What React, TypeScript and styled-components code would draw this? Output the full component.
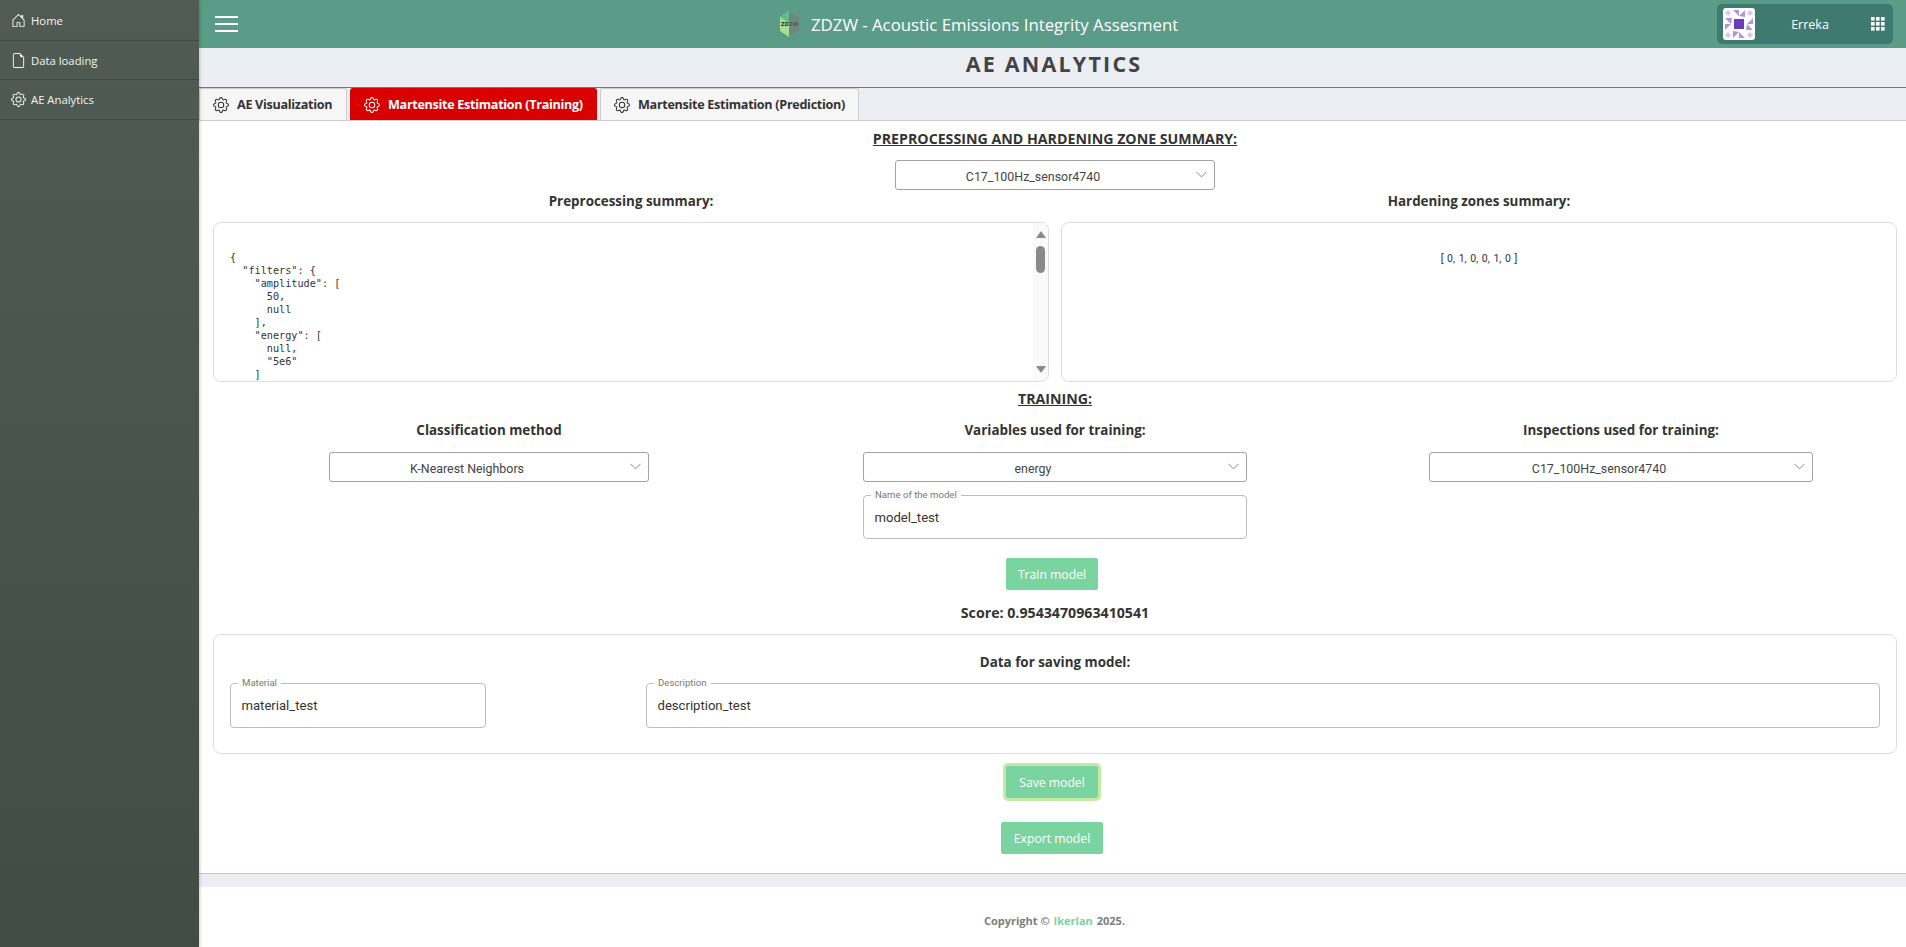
import React from 'react';
import styled, { createGlobalStyle } from 'styled-components';
import { ChevronDown } from 'lucide-react';
import { BsFileEarmark, BsGear, BsHouseDoor } from 'react-icons/bs';

const GlobalStyle = createGlobalStyle`
  html, body {
    margin: 0;
    padding: 0;
    height: 947px;
    overflow: hidden;
    background: #fff;
    font-family: "Open Sans", "Liberation Sans", sans-serif;
    color: #333;
  }
  * {
    box-sizing: border-box;
  }
`;

const Page = styled.div`
  display: grid;
  grid-template-columns: 199px 1fr;
  height: 947px;
`;

const Sidebar = styled.nav`
  background: linear-gradient(180deg, #505c53 0%, #4a564d 40%, #404c44 100%);
  box-shadow: 1px 0 3px rgba(0, 0, 0, 0.2);
  display: flex;
  flex-direction: column;
  z-index: 2;
`;

const SideItem = styled.a<{ $h: number }>`
  display: flex;
  align-items: center;
  gap: 5px;
  height: ${(p) => p.$h}px;
  padding: 1px 0 0 11px;
  color: #f2f4f2;
  font-size: 11.3px;
  border-bottom: 1px solid #3f4a43;
  svg {
    flex: none;
  }
`;

const SideItemLast = styled(SideItem)`
  padding-top: 0;
`;

const Main = styled.div`
  display: flex;
  flex-direction: column;
  min-width: 0;
`;

const TopBar = styled.header`
  position: relative;
  display: flex;
  align-items: center;
  justify-content: space-between;
  height: 48px;
  background: #5a9c87;
  padding: 0 13px 0 16px;
`;

const Burger = styled.div`
  display: flex;
  flex-direction: column;
  gap: 5px;
  width: 23px;
  span {
    display: block;
    height: 2px;
    background: #fff;
  }
`;

const Brand = styled.div`
  position: absolute;
  left: 580px;
  top: 0;
  height: 48px;
  display: flex;
  align-items: center;
  gap: 11px;
  color: #fff;
  font-size: 16.8px;
  white-space: nowrap;
`;

const UserBox = styled.div`
  display: flex;
  align-items: center;
  width: 176px;
  height: 40px;
  border-radius: 5px;
  background: #3e7a70;
  padding: 0 8px 0 6px;
  color: #fff;
  font-size: 12.5px;
`;

const Avatar = styled.div`
  width: 32px;
  height: 32px;
  border-radius: 3px;
  background: #fff;
  display: flex;
  align-items: center;
  justify-content: center;
`;

const UserName = styled.span`
  flex: 1;
  text-align: center;
  padding-right: 6px;
`;

const TitleBand = styled.div`
  height: 40px;
  background: #ebeef3;
  border-bottom: 1px solid #777;
  text-align: center;
  padding-left: 3px;
  font-size: 21.5px;
  line-height: 32px;
  font-weight: 700;
  letter-spacing: 2.2px;
  color: #444;
`;

const TabBar = styled.div`
  display: flex;
  gap: 3px;
  height: 33px;
  background: #ebeef3;
  border-bottom: 1px solid #ccc;
`;

const Tab = styled.div<{ $active?: boolean; $w: number }>`
  display: flex;
  align-items: center;
  gap: 8px;
  width: ${(p) => p.$w}px;
  padding-left: 13px;
  font-size: 12.6px;
  letter-spacing: -0.3px;
  font-weight: 700;
  white-space: nowrap;
  border-radius: 3px 3px 0 0;
  background: ${(p) => (p.$active ? '#d90000' : '#f6f6f6')};
  color: ${(p) => (p.$active ? '#fff' : '#333')};
  border: 1px solid ${(p) => (p.$active ? '#d90000' : '#ccc')};
  border-bottom: 0;
  svg {
    flex: none;
  }
`;

const Content = styled.main`
  flex: 1;
  display: flex;
  flex-direction: column;
  align-items: center;
  padding: 0 9px 0 14px;
  min-height: 0;
`;

const SectionTitle = styled.h2`
  margin: 0;
  font-size: 14.2px;
  line-height: 20px;
  font-weight: 700;
  text-decoration: underline;
  text-align: center;
  color: #333;
`;

const Label = styled.div`
  font-size: 13.4px;
  line-height: 20px;
  font-weight: 700;
  text-align: center;
  color: #333;
`;

const ScoreLabel = styled(Label)`
  font-size: 14.2px;
`;

const SelectBox = styled.div<{ $w: number }>`
  position: relative;
  width: ${(p) => p.$w}px;
  height: 30px;
  border: 1px solid #a3a3a3;
  border-radius: 3px;
  background: #fff;
  display: flex;
  align-items: center;
  justify-content: center;
  padding: 3px 44px 0 0;
  font-family: Roboto, "Liberation Sans", sans-serif;
  font-size: 12.4px;
  color: #444;
  svg {
    position: absolute;
    right: 3px;
    top: 4px;
    color: #777;
  }
`;

const SummaryRow = styled.div`
  display: grid;
  grid-template-columns: 1fr 1fr;
  gap: 12px;
  width: 100%;
`;

const SummaryCol = styled.div`
  display: flex;
  flex-direction: column;
  gap: 11px;
`;

const SummaryBox = styled.div`
  display: flex;
  height: 160px;
  border: 1px solid #ddd;
  border-radius: 8px;
  overflow: hidden;
`;

const CodeBlock = styled.pre`
  flex: 1;
  margin: 0;
  padding: 28px 16px 0;
  font-family: "DejaVu Sans Mono", "Liberation Mono", monospace;
  font-size: 10.2px;
  line-height: 13px;
  color: #333;
  overflow: hidden;
`;

const Scrollbar = styled.div`
  width: 15px;
  display: flex;
  flex-direction: column;
  align-items: center;
  padding: 8px 0;
  background: #fafafa;
`;

const ArrowUp = styled.div`
  width: 0;
  height: 0;
  border-left: 5px solid transparent;
  border-right: 5px solid transparent;
  border-bottom: 7px solid #8a8a8a;
`;

const ArrowDown = styled(ArrowUp)`
  border-bottom: 0;
  border-top: 7px solid #8a8a8a;
  margin-top: auto;
`;

const Thumb = styled.div`
  width: 9px;
  height: 27px;
  margin-top: 8px;
  border-radius: 5px;
  background: #8a8a8a;
`;

const ZonesText = styled.div`
  flex: 1;
  padding-top: 29px;
  text-align: center;
  font-family: Roboto, "Liberation Sans", sans-serif;
  font-size: 10.5px;
  word-spacing: 1px;
  line-height: 13px;
  color: #333;
`;

const TrainingGrid = styled.div`
  display: grid;
  grid-template-columns: repeat(3, 566px);
  justify-content: center;
  width: 100%;
  margin: 11px 0 13px;
`;

const TrainingCol = styled.div`
  display: flex;
  flex-direction: column;
  align-items: center;
  gap: 12px;
`;

const TextField = styled.div<{ $w?: number; $h: number }>`
  position: relative;
  width: ${(p) => (p.$w ? `${p.$w}px` : 'auto')};
  flex: ${(p) => (p.$w ? 'none' : 1)};
  height: ${(p) => p.$h}px;
  border: 1px solid #bdbdbd;
  border-radius: 4px;
  display: flex;
  align-items: center;
  padding: 0 11px 0 10.5px;
  font-family: Roboto, "Liberation Sans", sans-serif;
  font-size: 13.1px;
  color: #333;
  legend {
    position: absolute;
    left: 7px;
    top: -7px;
    padding: 0 4px;
    background: #fff;
    font-size: 9.6px;
    line-height: 11px;
    color: #777;
  }
`;

const PrimaryButton = styled.button<{ $w: number; $focused?: boolean }>`
  width: ${(p) => p.$w}px;
  height: 32px;
  margin-right: 6px;
  border: 0;
  border-radius: 2px;
  background: #79d4a0;
  color: #fff;
  font-family: "Open Sans", "Liberation Sans", sans-serif;
  font-size: 12.2px;
  padding: 0;
  box-shadow: ${(p) => (p.$focused ? '0 0 0 3px #c6e9a6' : 'none')};
`;

const SaveCard = styled.section`
  width: 100%;
  height: 120px;
  border: 1px solid #ddd;
  border-radius: 8px;
  padding: 17px 16px 0;
  display: flex;
  flex-direction: column;
  gap: 11px;
`;

const SaveRow = styled.div`
  display: flex;
  gap: 160px;
`;

const FillBand = styled.div`
  height: 14px;
  background: #ebeef3;
  border-top: 1px solid #c8c8c8;
`;

const Footer = styled.footer`
  height: 60px;
  display: flex;
  align-items: center;
  justify-content: center;
  padding: 7px 0 0 4px;
  font-size: 11px;
  font-weight: 700;
  color: #7c7c7c;
  span {
    color: #79d4a0;
    margin: 0 4px;
  }
`;

const Gap = styled.div<{ $h: number }>`
  flex: none;
  height: ${(p) => p.$h}px;
`;

const Logo = () => (
  <svg width="21" height="26" viewBox="0 0 21 26">
    <path d="M10 0 L19 6 L19 20 L10 26 L1 20 L1 6 Z" fill="#a9dc8f" />
    <path d="M10 0 L19 6 L10 12 L1 6 Z" fill="#63b98b" />
    <path d="M10 0 L20 6 L20 20 L10 26 Z" fill="#6e8880" />
    <text x="2" y="15" fontSize="6" fontWeight="700" fill="#1d2b25" fontFamily="Open Sans">ZD</text>
    <text x="10" y="15" fontSize="6" fontWeight="700" fill="#47605a" fontFamily="Open Sans">ZW</text>
  </svg>
);

const Identicon = () => (
  <svg width="28" height="28" viewBox="0 0 28 28">
    <rect x="9" y="9" width="10" height="10" fill="#6a3dba" />
    <path d="M3 0 L6 3 L3 6 L0 3 Z M25 0 L28 3 L25 6 L22 3 Z M3 22 L6 25 L3 28 L0 25 Z M25 22 L28 25 L25 28 L22 25 Z" fill="#d6c5ef" />
    <path d="M8 0 L14 0 L14 6 Z M20 7 L20 0 L14 6 Z M28 8 L28 14 L22 14 Z M21 20 L28 20 L22 14 Z M20 28 L14 28 L14 22 Z M8 21 L8 28 L14 22 Z M0 20 L0 14 L6 14 Z M7 8 L0 8 L6 14 Z" fill="#b294de" />
  </svg>
);

const DotsGrid = () => (
  <svg width="14" height="14" viewBox="0 0 14 14" fill="#fff">
    {[0, 5, 10].flatMap((y) =>
      [0, 5, 10].map((x) => <rect key={`${x}-${y}`} x={x} y={y} width="3.6" height="3.6" />)
    )}
  </svg>
);

// only the lines visible at this scroll position
const codeText = `{
  "filters": {
    "amplitude": [
      50,
      null
    ],
    "energy": [
      null,
      "5e6"
    ]`;

export default function App() {
  return (
    <Page>
      <GlobalStyle />
      <Sidebar>
        <SideItem $h={41}>
          <BsHouseDoor size={15} />
          Home
        </SideItem>
        <SideItem $h={39}>
          <BsFileEarmark size={15} />
          Data loading
        </SideItem>
        <SideItemLast $h={40}>
          <BsGear size={15} />
          AE Analytics
        </SideItemLast>
      </Sidebar>
      <Main>
        <TopBar>
          <Burger>
            <span />
            <span />
            <span />
          </Burger>
          <Brand>
            <Logo />
            ZDZW - Acoustic Emissions Integrity Assesment
          </Brand>
          <UserBox>
            <Avatar>
              <Identicon />
            </Avatar>
            <UserName>Erreka</UserName>
            <DotsGrid />
          </UserBox>
        </TopBar>
        <TitleBand>AE ANALYTICS</TitleBand>
        <TabBar>
          <Tab $w={148}>
            <BsGear size={16} />
            AE Visualization
          </Tab>
          <Tab $w={247} $active>
            <BsGear size={16} />
            Martensite Estimation (Training)
          </Tab>
          <Tab $w={259}>
            <BsGear size={16} />
            Martensite Estimation (Prediction)
          </Tab>
        </TabBar>
        <Content>
          <Gap $h={8} />
          <SectionTitle>PREPROCESSING AND HARDENING ZONE SUMMARY:</SectionTitle>
          <Gap $h={11} />
          <SelectBox $w={320}>
            C17_100Hz_sensor4740
            <ChevronDown size={19} strokeWidth={1.1} />
          </SelectBox>
          <Gap $h={1} />
          <SummaryRow>
            <SummaryCol>
              <Label>Preprocessing summary:</Label>
              <SummaryBox>
                <CodeBlock>{codeText}</CodeBlock>
                <Scrollbar>
                  <ArrowUp />
                  <Thumb />
                  <ArrowDown />
                </Scrollbar>
              </SummaryBox>
            </SummaryCol>
            <SummaryCol>
              <Label>Hardening zones summary:</Label>
              <SummaryBox>
                <ZonesText>[ 0, 1, 0, 0, 1, 0 ]</ZonesText>
              </SummaryBox>
            </SummaryCol>
          </SummaryRow>
          <Gap $h={7} />
          <SectionTitle>TRAINING:</SectionTitle>
          <TrainingGrid>
            <TrainingCol>
              <Label>Classification method</Label>
              <SelectBox $w={320}>
                K-Nearest Neighbors
                <ChevronDown size={19} strokeWidth={1.1} />
              </SelectBox>
            </TrainingCol>
            <TrainingCol>
              <Label>Variables used for training:</Label>
              <SelectBox $w={384}>
                energy
                <ChevronDown size={19} strokeWidth={1.1} />
              </SelectBox>
            </TrainingCol>
            <TrainingCol>
              <Label>Inspections used for training:</Label>
              <SelectBox $w={384}>
                C17_100Hz_sensor4740
                <ChevronDown size={19} strokeWidth={1.1} />
              </SelectBox>
            </TrainingCol>
          </TrainingGrid>
          <TextField $w={384} $h={44}>
            <legend>Name of the model</legend>
            model_test
          </TextField>
          <Gap $h={19} />
          <PrimaryButton $w={92}>Train model</PrimaryButton>
          <Gap $h={13} />
          <ScoreLabel>Score: 0.9543470963410541</ScoreLabel>
          <Gap $h={11} />
          <SaveCard>
            <Label>Data for saving model:</Label>
            <SaveRow>
              <TextField $w={256} $h={45}>
                <legend>Material</legend>
                material_test
              </TextField>
              <TextField $h={45}>
                <legend>Description</legend>
                description_test
              </TextField>
            </SaveRow>
          </SaveCard>
          <Gap $h={12} />
          <PrimaryButton $w={92} $focused>Save model</PrimaryButton>
          <Gap $h={24} />
          <PrimaryButton $w={102}>Export model</PrimaryButton>
        </Content>
        <FillBand />
        <Footer>
          Copyright © <span>Ikerlan</span> 2025.
        </Footer>
      </Main>
    </Page>
  );
}
